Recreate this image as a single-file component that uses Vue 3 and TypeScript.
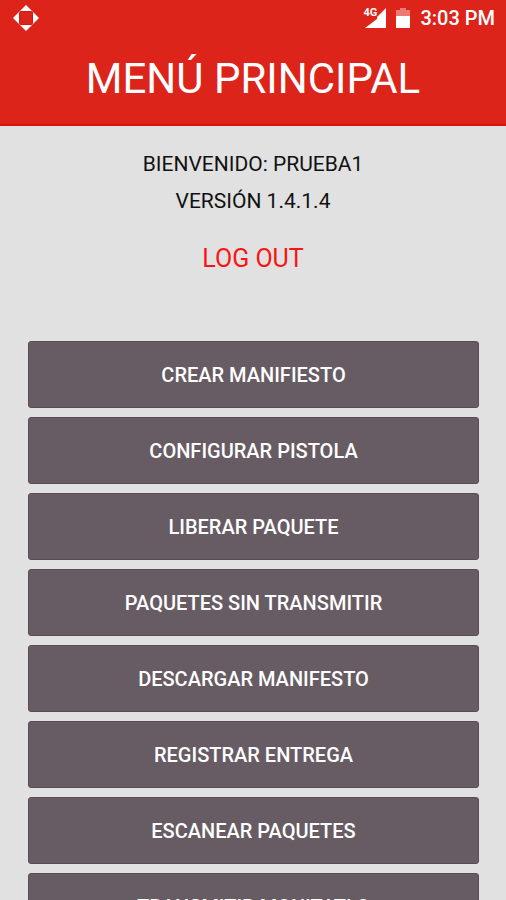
<script setup lang="ts">
const user = 'PRUEBA1'
const version = '1.4.1.4'

const actions: string[] = [
  'CREAR MANIFIESTO',
  'CONFIGURAR PISTOLA',
  'LIBERAR PAQUETE',
  'PAQUETES SIN TRANSMITIR',
  'DESCARGAR MANIFESTO',
  'REGISTRAR ENTREGA',
  'ESCANEAR PAQUETES',
  'TRANSMITIR MONITATLO',
]
</script>

<template>
  <div class="screen">
    <header class="top">
      <div class="status">
        <svg class="locate" viewBox="0 0 26 26" aria-hidden="true">
          <path d="M13 0 26 13 13 26 0 13Z" fill="#fff" />
          <rect x="6.5" y="6.5" width="13" height="13" rx="1" fill="#dc241b" stroke="#d2180f" />
        </svg>
        <div class="indicators">
          <div class="network">
            <svg class="signal" viewBox="0 0 21 20" aria-hidden="true">
              <path d="M21 0V20H0L12 11V9Z" fill="#fff" />
            </svg>
            <span class="network-type">4G</span>
          </div>
          <svg class="battery" viewBox="0 0 14 20" aria-hidden="true">
            <path d="M4 0H10V2H14V9H0V2H4Z" fill="#ec7a74" />
            <path d="M0 8H14V20H0Z" fill="#fff" />
          </svg>
          <time class="clock">3:03 PM</time>
        </div>
      </div>
      <h1 class="title">MENÚ PRINCIPAL</h1>
    </header>

    <main class="content">
      <section class="account">
        <p class="line">BIENVENIDO: {{ user }}</p>
        <p class="line">VERSIÓN {{ version }}</p>
        <button class="logout" type="button">LOG OUT</button>
      </section>
      <nav class="menu">
        <button v-for="action in actions" :key="action" class="action" type="button">
          {{ action }}
        </button>
      </nav>
    </main>
  </div>
</template>

<style>
body {
  margin: 0;
  background: #e1e1e1;
}

html,
body,
#app {
  height: 100%;
}
</style>

<style scoped>
.screen {
  height: 100%;
  overflow: hidden;
  background: #e1e1e1;
  color: #111;
  font-family: Roboto, "Liberation Sans", sans-serif;
}

.top {
  box-sizing: border-box;
  padding-bottom: 19px;
  border-bottom: 2px solid #d2150d;
  background: #dc241b;
  color: #fff;
}

.status {
  display: flex;
  align-items: center;
  justify-content: space-between;
  height: 36px;
  padding: 0 11px 0 13px;
}

.locate {
  width: 26px;
  height: 26px;
}

.indicators {
  display: flex;
  align-items: center;
  gap: 10px;
}

.network {
  position: relative;
  display: flex;
  padding-left: 2px;
}

.signal {
  width: 21px;
  height: 20px;
}

.network-type {
  position: absolute;
  top: -1px;
  left: 0;
  font-size: 11px;
  line-height: 11px;
  font-weight: 700;
}

.battery {
  width: 14px;
  height: 20px;
}

.clock {
  font-size: 20px;
  line-height: 24px;
  font-weight: 500;
}

.title {
  margin: 0;
  padding-top: 17px;
  font-size: 42px;
  line-height: 52px;
  font-weight: 400;
  text-align: center;
}

.account {
  display: flex;
  flex-direction: column;
  align-items: center;
  padding-top: 26px;
}

.line {
  margin: 0 0 13px;
  font-size: 21px;
  line-height: 24px;
}

.logout {
  margin-top: 17px;
  padding: 0;
  border: 0;
  background: none;
  color: #fb1414;
  font: inherit;
  font-size: 25px;
  line-height: 32px;
}

.menu {
  display: flex;
  flex-direction: column;
  gap: 9px;
  padding: 66px 27px 0 28px;
}

.action {
  box-sizing: border-box;
  flex: none;
  height: 67px;
  padding: 0;
  border: 1px solid #594c54;
  border-radius: 3px;
  background: #675c63;
  color: #fff;
  font: inherit;
  font-size: 20px;
  line-height: 24px;
  font-weight: 500;
}
</style>
